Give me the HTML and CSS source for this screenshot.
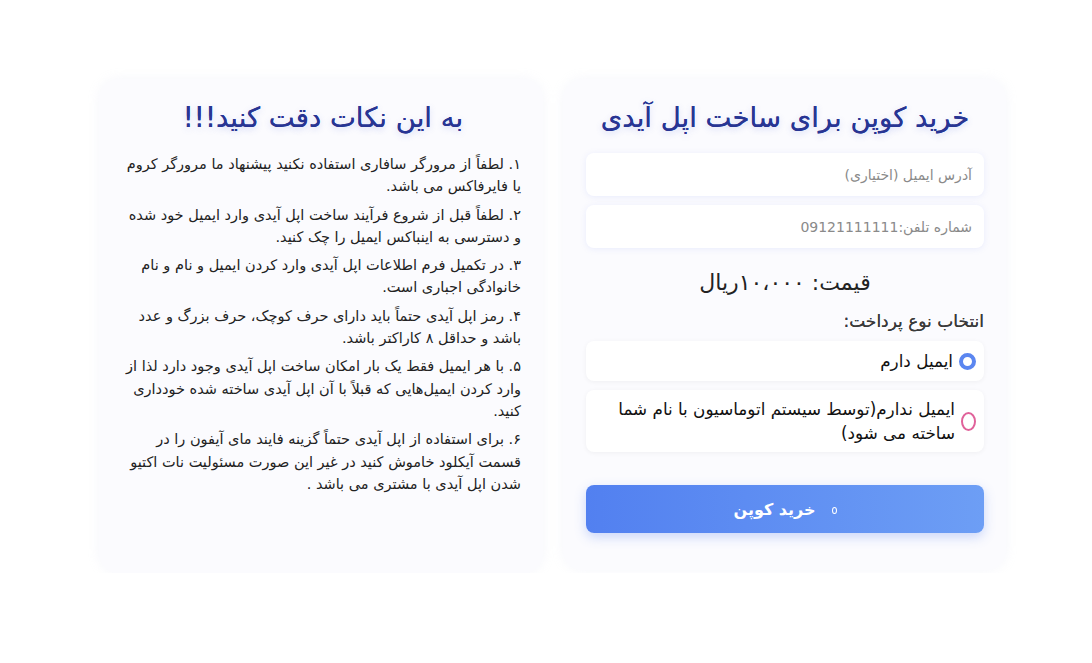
FILE: index.html
```html
<!DOCTYPE html>
<html lang="fa" dir="rtl">
<head>
<meta charset="utf-8">
<title>خرید کوپن</title>
<link rel="stylesheet" href="styles.css">
</head>
<body>
<div class="wrap">
  <section class="card buy">
    <h1 class="title">خرید کوپن برای ساخت اپل آیدی</h1>
    <div class="field"><span class="ph">آدرس ایمیل (اختیاری)</span></div>
    <div class="field"><span class="ph">شماره تلفن:09121111111</span></div>
    <div class="price">قیمت: ۱۰،۰۰۰ریال</div>
    <div class="label">انتخاب نوع پرداخت:</div>
    <div class="option">
      <span class="radio on"></span>
      <span class="otext">ایمیل دارم</span>
    </div>
    <div class="option tall">
      <span class="radio off"></span>
      <span class="otext">ایمیل ندارم(توسط سیستم اتوماسیون با نام شما ساخته می شود)</span>
    </div>
    <button class="btn"><span class="bicon"></span><span>خرید کوپن</span></button>
  </section>
  <section class="card notes">
    <h2 class="title">به این نکات دقت کنید!!!</h2>
    <p>۱. لطفاً از مرورگر سافاری استفاده نکنید پیشنهاد ما مرورگر کروم یا فایرفاکس می باشد.</p>
    <p>۲. لطفاً قبل از شروع فرآیند ساخت اپل آیدی وارد ایمیل خود شده و دسترسی به اینباکس ایمیل را چک کنید.</p>
    <p>۳. در تکمیل فرم اطلاعات اپل آیدی وارد کردن ایمیل و نام و نام خانوادگی اجباری است.</p>
    <p>۴. رمز اپل آیدی حتماً باید دارای حرف کوچک، حرف بزرگ و عدد باشد و حداقل ۸ کاراکتر باشد.</p>
    <p>۵. با هر ایمیل فقط یک بار امکان ساخت اپل آیدی وجود دارد لذا از وارد کردن ایمیل‌هایی که قبلاً با آن اپل آیدی ساخته شده خودداری کنید.</p>
    <p>۶. برای استفاده از اپل آیدی حتماً گزینه فایند مای آیفون را در قسمت آیکلود خاموش کنید در غیر این صورت مسئولیت نات اکتیو شدن اپل آیدی با مشتری می باشد .</p>
  </section>
</div>
</body>
</html>
```
FILE: styles.css
```css
* { box-sizing: border-box; }
html, body { margin: 0; padding: 0; background: #ffffff; }
body {
  font-family: "DejaVu Sans", "Noto Sans", sans-serif;
  color: #222;
  direction: rtl;
}
.wrap {
  display: flex;
  flex-direction: row;
  justify-content: center;
  align-items: flex-start;
  gap: 20px;
  padding-top: 79px;
  padding-left: 96px;
  padding-right: 83px;
}
.card {
  background: #fbfbfe;
  border-radius: 20px;
  box-shadow: 0 0 12px rgba(200, 205, 235, 0.18);
}
.buy {
  width: 443px;
  height: 491px;
  padding: 18px 22px 0 23px;
  display: flex;
  flex-direction: column;
}
.notes {
  width: 444px;
  height: 494px;
  padding: 18px 22px 0 26px;
}
.title {
  margin: 0;
  text-align: center;
  font-weight: normal;
  color: #283593;
  font-size: 27.5px;
  line-height: 40px;
  text-shadow: 0 2px 6px rgba(90, 110, 220, 0.25), 0 0 0.6px #283593;
}
.buy .title { margin-bottom: 16px; }
.notes .title { margin-bottom: 16px; }
.field {
  height: 43px;
  background: #fff;
  border-radius: 8px;
  box-shadow: 0 1px 6px rgba(130, 150, 240, 0.15);
  margin-bottom: 9px;
  display: flex;
  align-items: center;
  padding: 0 12px;
}
.ph { color: #8a8a8a; font-size: 14px; }
.price {
  text-align: center;
  font-size: 22px;
  color: #222;
  margin-top: 11px;
  line-height: 30px;
}
.label {
  font-size: 17px;
  color: #3a3a3a;
  margin-top: 11px;
  line-height: 24px;
  margin-bottom: 8px;
  text-shadow: 0 0 0.4px #3a3a3a;
}
.option {
  background: #fff;
  border-radius: 8px;
  box-shadow: 0 1px 5px rgba(0, 0, 0, 0.05);
  display: flex;
  align-items: center;
  gap: 6px;
  padding: 6px 8px;
  min-height: 40px;
  margin-bottom: 9px;
}
.option.tall { min-height: 62px; }
.otext { font-size: 16.8px; line-height: 24px; color: #111; }
.radio {
  flex: none;
  border-radius: 50%;
  background: #fff;
}
.radio.on {
  width: 17px; height: 17px;
  border: 4px solid #5b86f0;
}
.radio.off {
  width: 15px; height: 19px;
  border: 2px solid #e0629a;
}
.btn {
  margin-top: 24px;
  height: 48px;
  border: none;
  border-radius: 8px;
  background: linear-gradient(to left, #6d9ef5, #5280f0);
  box-shadow: 0 4px 12px rgba(90, 130, 240, 0.3);
  color: #fff;
  font-family: "DejaVu Sans", sans-serif;
  font-weight: bold;
  font-size: 16px;
  display: flex;
  align-items: center;
  justify-content: center;
  gap: 16px;
  direction: rtl;
}
.bicon {
  width: 5px;
  height: 7px;
  border: 1.5px solid #fff;
  border-radius: 50%;
  margin-top: 2px;
}
.notes p {
  margin: 0 0 6px 0;
  font-size: 14.5px;
  line-height: 22.3px;
  color: #222;
  text-align: right;
}
```
